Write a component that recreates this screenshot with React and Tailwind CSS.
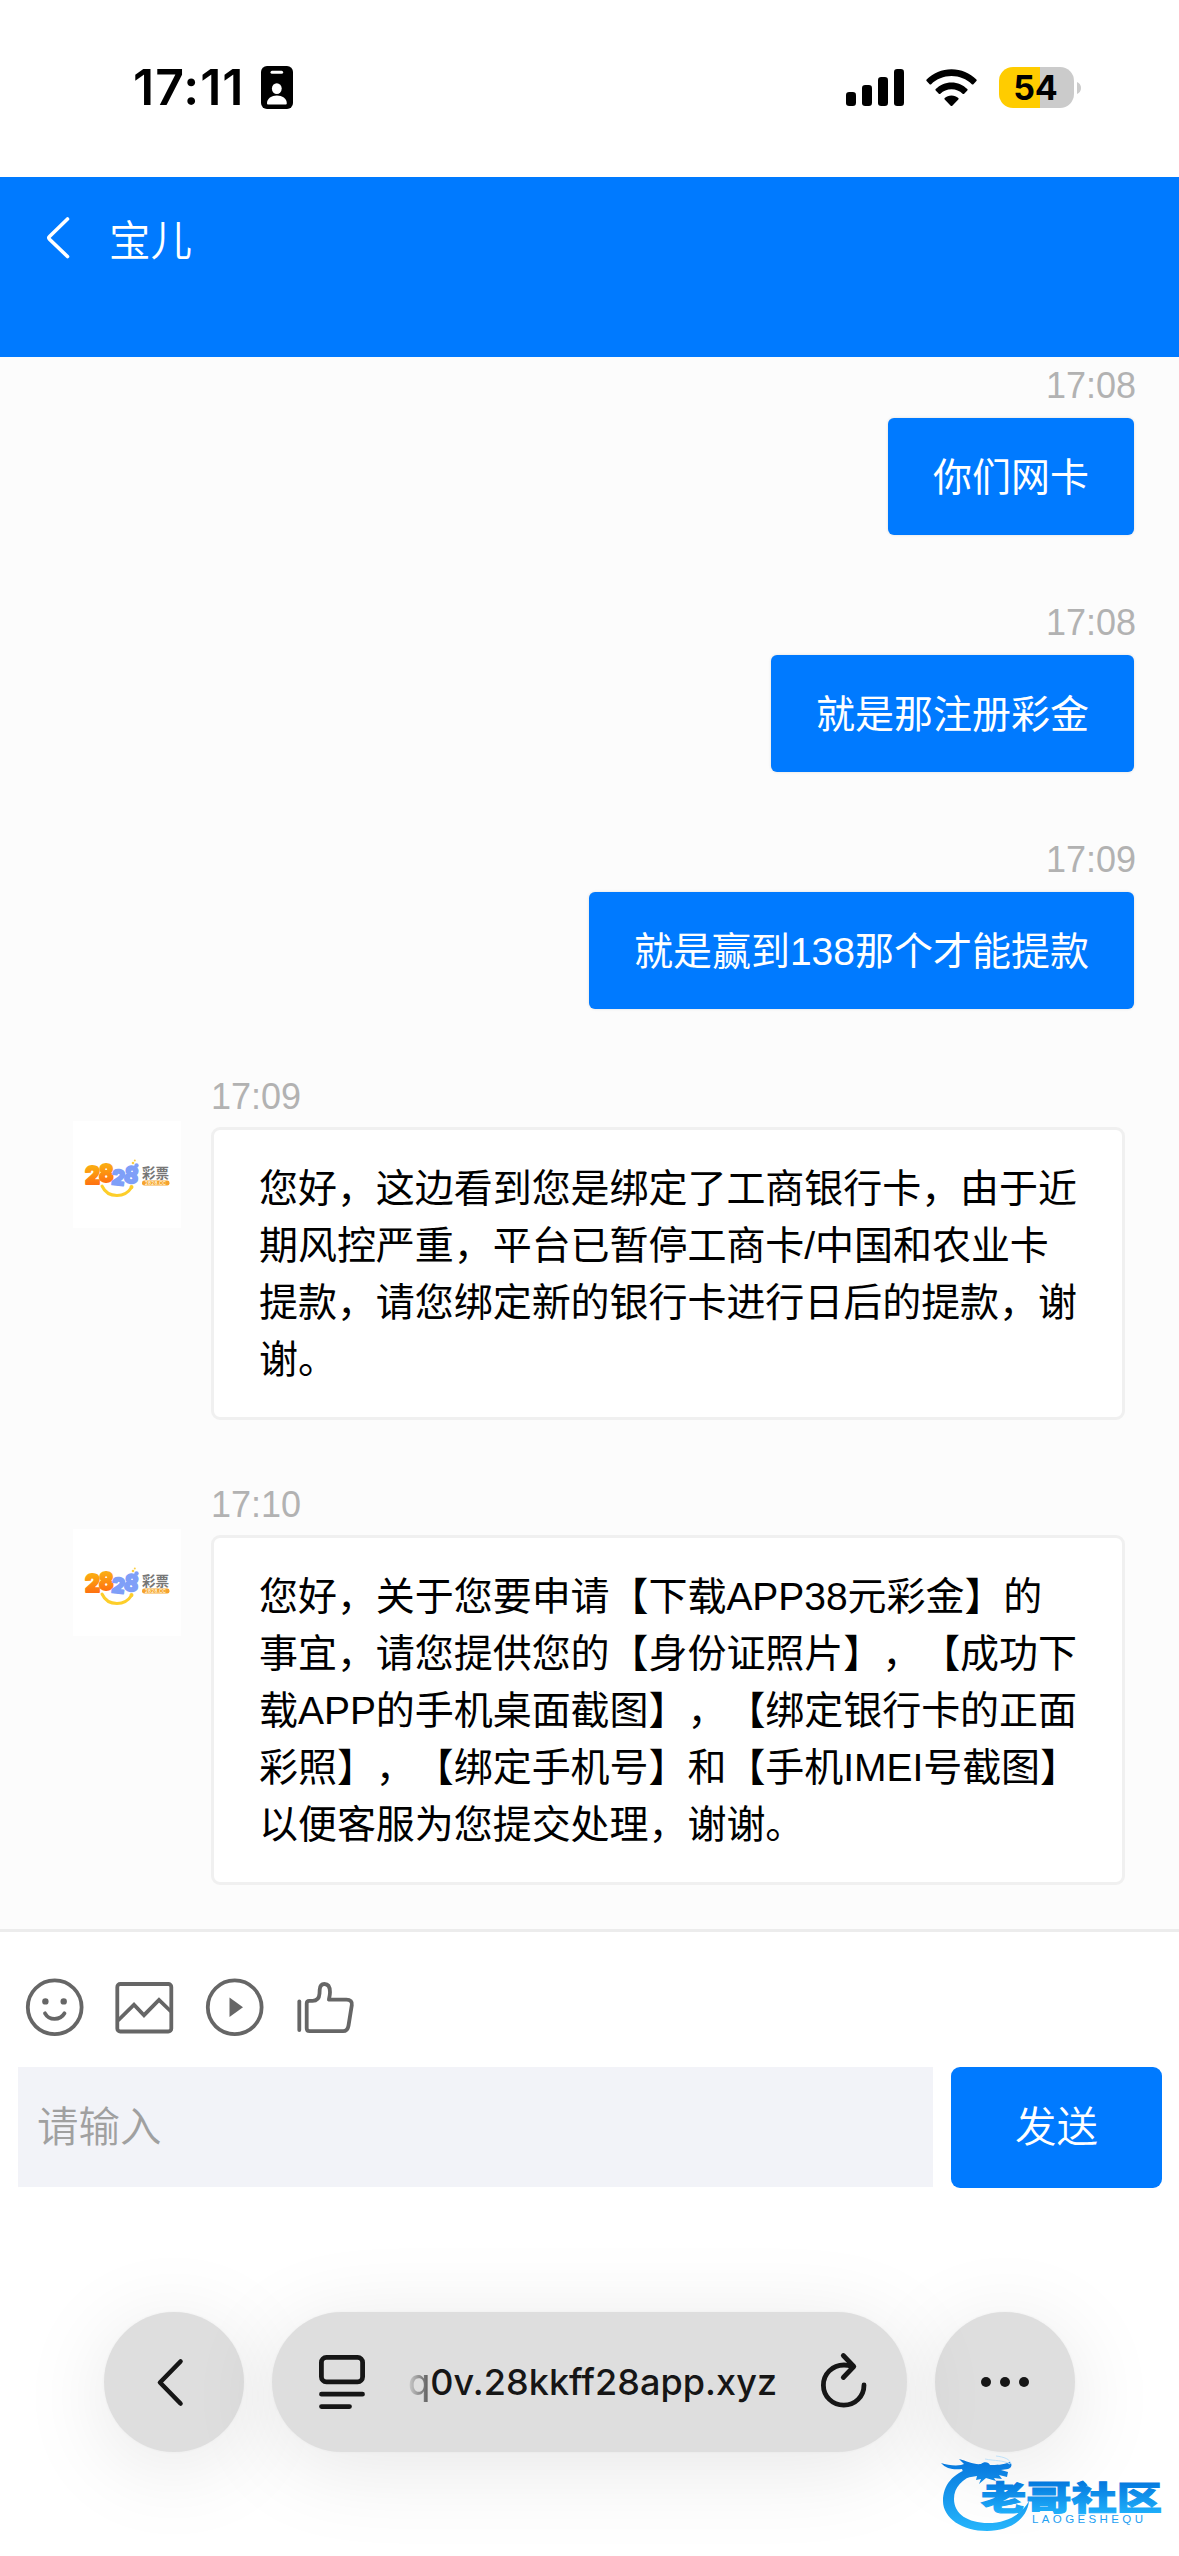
import React from "react";

const TEXT = "font-['Liberation_Sans','Noto_Sans_CJK_SC',sans-serif]";

function StatusBar() {
  return (
    <div className="flex h-[177px] items-start justify-between bg-white pl-[133px] pr-[98px] pt-[66px] text-black">
      <div className="flex h-[43px] items-center">
        <span className="w-[128px] font-['Inter',sans-serif] text-[50px] font-semibold leading-[43px] tracking-[1px]">17:11</span>
        <svg width="32" height="43" viewBox="0 0 32 43">
          <rect width="32" height="43" rx="6" />
          <rect x="9.5" y="4.8" width="12.6" height="3" rx="1.5" fill="#fff" />
          <ellipse cx="15.8" cy="22.6" rx="4.9" ry="5.4" fill="#fff" />
          <path d="M6 37.2c0-4.600 4.600-7.600 9.900-7.600s9.900 3 9.900 7.600c0 .9-.5 1.300-1.300 1.300H7.300C6.500 38.500 6 38.100 6 37.200Z" fill="#fff" />
        </svg>
      </div>
      <div className="flex h-[43px] items-center">
        <svg width="58" height="38" viewBox="0 0 58 38" className="mr-[22px]">
          <rect x="0" y="23" width="10" height="14" rx="3.200" />
          <rect x="16" y="16" width="10" height="21" rx="3.200" />
          <rect x="32" y="8" width="10" height="29" rx="3.200" />
          <rect x="48" y="0" width="10" height="37" rx="3.200" />
        </svg>
        <svg width="51" height="38" viewBox="0 0 51 38" className="mr-[22px]">
          <path d="M.6 10.600C7.100 4 15.800.2 25.500.2S43.900 4 50.400 10.600c.5.500.5 1 0 1.500l-3 3.100c-.5.500-1.100.5-1.600 0C40.500 10.100 33.300 7.100 25.500 7.100S10.500 10.100 5.200 15.200c-.5.500-1.100.5-1.600 0L.6 12.100c-.5-.5-.5-1 0-1.500Z" />
          <path d="M9.700 20.100c4.100-4.100 9.600-6.600 15.800-6.600s11.700 2.500 15.800 6.600c.5.500.5 1 0 1.500l-3.100 3.100c-.5.500-1.100.5-1.600 0-2.900-2.700-6.800-4.400-11.100-4.400s-8.200 1.700-11.100 4.400c-.5.500-1.100.5-1.600 0l-3.100-3.100c-.5-.5-.5-1 0-1.500Z" />
          <path d="M18.700 29.100c1.800-1.700 4.100-2.600 6.800-2.600s5 .9 6.800 2.600c.5.500.5 1 0 1.500l-6 6.100c-.5.500-1.100.5-1.600 0l-6-6.100c-.5-.5-.5-1 0-1.500Z" />
        </svg>
        <div className="flex h-[41px] w-[75px] items-center justify-center overflow-hidden rounded-[14px] bg-[linear-gradient(to_right,#ffcc00_41px,#cbcbcb_41px)] pr-[2px]">
          <span className="font-['Inter',sans-serif] text-[34px] font-bold leading-[41px]">54</span>
        </div>
        <svg width="4" height="12" viewBox="0 0 4 12" className="ml-[3px]">
          <path d="M0 0c2.500 1 4 3.300 4 6s-1.500 5-4 6Z" fill="#cbcbcb" />
        </svg>
      </div>
    </div>
  );
}

function Header() {
  return (
    <header className="flex h-[180px] items-start bg-[#007aff] pl-[46px] pt-[40px] text-white">
      <svg width="24" height="42" viewBox="0 0 24 42" fill="none" stroke="currentColor" strokeWidth="3.600" strokeLinecap="round" strokeLinejoin="round">
        <path d="M21.500 2 3.500 19.500c-.9.900-.9 1.800 0 2.700L21.500 39.500" />
      </svg>
      <h1 className="ml-[39px] pt-px text-[41.500px] font-[350] leading-[47px]">宝儿</h1>
    </header>
  );
}

function Sent({ time, children }) {
  return (
    <div className="flex flex-col items-end pr-[45px]">
      <time className="-mr-[2px] block h-[51px] text-[36px] leading-[53px] text-[#b2b2b2]">{time}</time>
      <div className="mt-[8px] h-[117px] whitespace-nowrap rounded-[6px] bg-[#007aff] px-[45px] pt-px text-[39px] leading-[117px] text-white shadow-[0_0_3px_rgba(0,0,0,0.12)]">{children}</div>
    </div>
  );
}

function Logo() {
  return (
    <svg width="108" height="107" viewBox="0 0 108 107" className="block bg-white">
      <defs>
        <linearGradient id="warm" x1="0" y1="0" x2="0" y2="1">
          <stop offset="0.2" stopColor="#fbab12" />
          <stop offset="0.9" stopColor="#ff6a10" />
        </linearGradient>
      </defs>
      <path d="M29 65c3 6.500 8 9.500 15 9.500s12-4 14.500-8" fill="none" stroke="#fdce2a" strokeWidth="3" strokeLinecap="round" />
      <circle cx="58.500" cy="66" r="2" fill="#fdce2a" />
      <g className="font-['Inter',sans-serif] font-black" fontSize="24" strokeWidth="1.800" strokeLinejoin="round">
        <text x="12" y="63" textLength="15" lengthAdjust="spacingAndGlyphs" fill="url(#warm)" stroke="url(#warm)">2</text>
        <text x="26" y="61" textLength="14.500" lengthAdjust="spacingAndGlyphs" fill="url(#warm)" stroke="url(#warm)">8</text>
        <text x="39" y="64" fontSize="21" textLength="13" lengthAdjust="spacingAndGlyphs" fill="#7f9ff8" stroke="#7f9ff8" transform="rotate(7 45 56)">2</text>
        <text x="51.500" y="62" fontSize="23" textLength="14" lengthAdjust="spacingAndGlyphs" fill="#7f9ff8" stroke="#7f9ff8" transform="rotate(7 58 54)">8</text>
      </g>
      <circle cx="63.500" cy="44.500" r="2.200" fill="#7f9ff8" />
      <circle cx="60" cy="42" r="1.300" fill="#fbcf45" />
      <circle cx="61.800" cy="39.500" r="1" fill="#fbcf45" />
      <text x="69" y="57" fontSize="13.500" fontWeight="700" fill="#777" className="font-['Noto_Sans_CJK_SC',sans-serif]">彩票</text>
      <rect x="69" y="59.500" width="27.500" height="5" rx="2.200" fill="#f6a32c" />
      <text x="72" y="63.800" fontSize="4.600" fontWeight="700" textLength="21" fill="#fff3dd" className="font-['Inter',sans-serif]">2828.CC</text>
    </svg>
  );
}

function Received({ time, lines }) {
  return (
    <div className="mb-[58px] flex pl-[73px]">
      <div className="mt-[51px] h-[107px] w-[108px] shrink-0"><Logo /></div>
      <div className="ml-[30px]">
        <time className="block h-[51px] text-[36px] leading-[53px] text-[#b2b2b2]">{time}</time>
        <div className="mt-[6px] w-[914px] rounded-[9px] border-[3px] border-[#f0f0f0] bg-white pb-[29px] pl-[45px] pt-[30px] text-[39px] leading-[57px] tracking-[-0.05px] text-black">
          {lines.map((l) => (
            <p key={l} className="whitespace-nowrap [text-spacing-trim:space-all]">{l}</p>
          ))}
        </div>
      </div>
    </div>
  );
}

function Composer() {
  return (
    <section className="h-[345px] border-t-[3px] border-[#ececec] bg-white pt-[45px]">
      <div className="flex items-center gap-[30px] pl-[25px] text-[#666]">
        <svg width="60" height="60" viewBox="0 0 60 60" fill="none" stroke="currentColor" strokeWidth="3.800" strokeLinecap="round">
          <circle cx="29.700" cy="30.300" r="26.900" />
          <path d="M20 36.300c2 3.600 5.500 5.600 9.600 5.600s7.800-2 9.900-5.600" />
          <circle cx="20.400" cy="24.400" r="3.200" fill="currentColor" stroke="none" />
          <circle cx="38.700" cy="24.400" r="3.200" fill="currentColor" stroke="none" />
        </svg>
        <svg width="60" height="60" viewBox="0 0 60 60" fill="none" stroke="currentColor" strokeWidth="3.800">
          <rect x="2.300" y="7" width="54" height="47.500" rx="3" />
          <path d="m3 43.500 16-15.800 10 10.500 15-15.200 12 11.500" />
        </svg>
        <svg width="60" height="60" viewBox="0 0 60 60" fill="none" stroke="currentColor" strokeWidth="3.800">
          <circle cx="29.700" cy="30.300" r="26.900" />
          <path d="M24.500 20.500v19.500L38 30.200Z" fill="currentColor" stroke="none" />
        </svg>
        <svg width="60" height="60" viewBox="0 0 60 60" fill="none" stroke="currentColor" strokeWidth="3.800" strokeLinejoin="round" strokeLinecap="round">
          <path d="M4.300 24.500V53" />
          <path d="M11.700 26.500c0-1.700.9-2.600 2.600-2.600h3.200c4.200 0 6.700-2.500 7-7.200l.2-4c.2-3.600 1.900-5.700 4.700-5.700 3.500 0 5.600 3 5.600 8.300 0 2.500-.6 5-1.100 7.300h17.500c4 0 6 2.200 5.400 5.500l-3.300 20.500c-.6 3.600-2.200 5.600-5.400 5.600H14.700c-2 0-3-1-3-3Z" />
        </svg>
      </div>
      <div className="mt-[30px] flex gap-[18px] pl-[18px]">
        <div className="h-[120px] w-[915px] bg-[#f2f3f8] pl-[19px] text-[41.500px] font-[350] leading-[122px] text-[#a0a0a0]">请输入</div>
        <button className="block h-[121px] w-[211px] rounded-[9px] bg-[#007aff] text-[41.500px] font-[350] leading-[122px] text-white">发送</button>
      </div>
    </section>
  );
}

const GLASS = "flex h-[140px] items-center bg-[#dedede] text-[#161616] shadow-[0_14px_90px_rgba(0,0,0,0.1),0_0_3px_rgba(0,0,0,0.04)]";

function BrowserBar() {
  return (
    <nav className="flex gap-[28px] pl-[104px] pt-[38px]">
      <div className={`${GLASS} relative z-10 w-[140px] justify-center rounded-full`}>
        <svg width="30" height="50" viewBox="0 0 30 50" fill="none" stroke="currentColor" strokeWidth="4.600" strokeLinecap="round" strokeLinejoin="round" className="-ml-[8px]">
          <path d="M25.500 4.500 5 25.500 25.500 46.500" />
        </svg>
      </div>
      <div className={`${GLASS} relative z-10 w-[635px] rounded-full pl-[47px]`}>
        <svg width="46" height="54" viewBox="0 0 46 54" fill="none" stroke="currentColor" strokeWidth="4.800" strokeLinecap="round">
          <rect x="2.400" y="2.400" width="41.200" height="24.400" rx="5" />
          <path d="M2.500 39.200h41M2.500 51.600h28" />
        </svg>
        <span className="ml-[43px] w-[368px] whitespace-nowrap font-['Inter',sans-serif] text-[36px] font-medium leading-[50px] tracking-[0.05px]">
          <span className="bg-[linear-gradient(to_right,#cfcfcf,#555)] bg-clip-text text-transparent">q</span>0v.28kkff28app.xyz
        </span>
        <svg width="46" height="56" viewBox="0 0 46 56" fill="none" stroke="currentColor" strokeWidth="4.800" strokeLinecap="round" strokeLinejoin="round" className="-mt-[4px] ml-[45px]">
          <path d="M31 14.500c-2.500-1-5-1.500-8-1.500C11.300 13 2.400 22 2.400 33.200S11.500 53.200 22.800 53.200 43 44.500 43 33" />
          <path d="M22.300 3.500 32.800 14.500 22.300 25.500" />
        </svg>
      </div>
      <div className={`${GLASS} w-[140px] justify-center gap-[9px] rounded-full`}>
        <i className="size-[10px] rounded-full bg-[#161616]" />
        <i className="size-[10px] rounded-full bg-[#161616]" />
        <i className="size-[10px] rounded-full bg-[#161616]" />
      </div>
    </nav>
  );
}

function Watermark() {
  return (
    <svg width="224" height="78" viewBox="0 0 224 78" className="absolute left-[940px] top-[2455px] z-20">
      <defs>
        <linearGradient id="sea" gradientUnits="userSpaceOnUse" x1="0" y1="5" x2="0" y2="74">
          <stop offset="0" stopColor="#0777dd" />
          <stop offset="1" stopColor="#25b4fb" />
        </linearGradient>
        <linearGradient id="word" gradientUnits="userSpaceOnUse" x1="0" y1="27" x2="0" y2="58">
          <stop offset="0" stopColor="#0579de" />
          <stop offset="1" stopColor="#1eaefa" />
        </linearGradient>
      </defs>
      <path fill="url(#sea)" d="M31 13C13 18 3 30 3 46c0 17 19 30 44 30 22 0 40-11 42-30-7 13-22 22-41 22-20 0-34-9-34-24 0-12 8-20 22-25Z" />
      <path fill="url(#sea)" d="M1 8c6 2 14 3 20 2l3-1-5-5c8 2 15 6 22 5 3-3 8-2 9 1 6 0 13 0 20-3 3 3 1 6-2 7l-7 1 7 2-1 5-8-2 3 4-8-1 2 3-10-3-7 6 2-5-5 1 1-4-12 2-3-9C14 15 6 14 1 8Z" />
      <path d="M45 4c10 2 18 1 25 5M56 1c8 1 14 3 15 8" fill="none" stroke="#bfe2fa" strokeWidth="1" />
      <text className="font-['Noto_Sans_CJK_SC',sans-serif]">
        <tspan x="41" y="55" fontSize="33" fontWeight="900" textLength="181" lengthAdjust="spacingAndGlyphs" fill="url(#word)" stroke="url(#word)" strokeWidth="1">老哥社区</tspan>
        <tspan x="92" y="68" fontSize="11.500" textLength="111" fill="#1ea0f2" className="font-['Liberation_Sans',sans-serif]">LAOGESHEQU</tspan>
      </text>
    </svg>
  );
}

export default function App() {
  return (
    <div className={`${TEXT} relative h-[2556px] w-[1179px] overflow-hidden bg-white`}>
      <StatusBar />
      <Header />
      <main className="h-[1572px] overflow-hidden bg-[#fcfcfc] pt-[2px]">
        <div className="mb-[61px] flex flex-col gap-[61px]">
          <Sent time="17:08">你们网卡</Sent>
          <Sent time="17:08">就是那注册彩金</Sent>
          <Sent time="17:09">就是赢到138那个才能提款</Sent>
        </div>
        <Received
          time="17:09"
          lines={["您好，这边看到您是绑定了工商银行卡，由于近", "期风控严重，平台已暂停工商卡/中国和农业卡", "提款，请您绑定新的银行卡进行日后的提款，谢", "谢。"]}
        />
        <Received
          time="17:10"
          lines={["您好，关于您要申请【下载APP38元彩金】的", "事宜，请您提供您的【身份证照片】，【成功下", "载APP的手机桌面截图】，【绑定银行卡的正面", "彩照】，【绑定手机号】和【手机IMEI号截图】", "以便客服为您提交处理，谢谢。"]}
        />
      </main>
      <Composer />
      <BrowserBar />
      <Watermark />
    </div>
  );
}
